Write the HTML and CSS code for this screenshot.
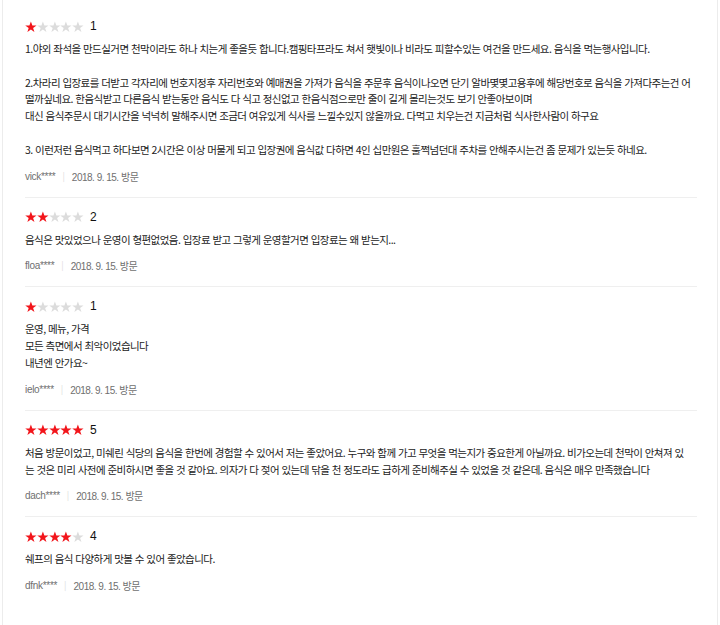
FILE: index.html
```html
<!DOCTYPE html>
<html lang="ko">
<head>
<meta charset="utf-8">
<link rel="stylesheet" href="styles.css">
<title>리뷰</title>
</head>
<body>
<div class="page">
  <ul class="reviews">
    <li class="review">
      <div class="rating">
        <span class="stars">
          <svg class="star on" viewBox="0 0 24 24"><polygon points="12,1 15,9 23.5,9 16.5,14.2 19.2,22.5 12,17.3 4.8,22.5 7.5,14.2 0.5,9 9,9"/></svg>
          <svg class="star" viewBox="0 0 24 24"><polygon points="12,1 15,9 23.5,9 16.5,14.2 19.2,22.5 12,17.3 4.8,22.5 7.5,14.2 0.5,9 9,9"/></svg>
          <svg class="star" viewBox="0 0 24 24"><polygon points="12,1 15,9 23.5,9 16.5,14.2 19.2,22.5 12,17.3 4.8,22.5 7.5,14.2 0.5,9 9,9"/></svg>
          <svg class="star" viewBox="0 0 24 24"><polygon points="12,1 15,9 23.5,9 16.5,14.2 19.2,22.5 12,17.3 4.8,22.5 7.5,14.2 0.5,9 9,9"/></svg>
          <svg class="star" viewBox="0 0 24 24"><polygon points="12,1 15,9 23.5,9 16.5,14.2 19.2,22.5 12,17.3 4.8,22.5 7.5,14.2 0.5,9 9,9"/></svg>
        </span>
        <span class="score">1</span>
      </div>
      <p class="text">1.야외 좌석을 만드실거면 천막이라도 하나 치는게 좋을듯 합니다.캠핑타프라도 쳐서 햇빛이나 비라도 피할수있는 여건을 만드세요. 음식을 먹는행사입니다.<br><br>2.차라리 입장료를 더받고 각자리에 번호지정후 자리번호와 예매권을 가져가 음식을 주문후 음식이나오면 단기 알바몇몇고용후에 해당번호로 음식을 가져다주는건 어<br>떨까싶네요. 한음식받고 다른음식 받는동안 음식도 다 식고 정신없고 한음식점으로만 줄이 길게 몰리는것도 보기 안좋아보이며<br>대신 음식주문시 대기시간을 넉넉히 말해주시면 조금더 여유있게 식사를 느낄수있지 않을까요. 다먹고 치우는건 지금처럼 식사한사람이 하구요<br><br>3. 이런저런 음식먹고 하다보면 2시간은 이상 머물게 되고 입장권에 음식값 다하면 4인 십만원은 훌쩍넘던대 주차를 안해주시는건 좀 문제가 있는듯 하네요.</p>
      <div class="meta"><span class="user">vick****</span><span class="sep">|</span><span class="date">2018. 9. 15. 방문</span></div>
    </li>
    <li class="review">
      <div class="rating">
        <span class="stars">
          <svg class="star on" viewBox="0 0 24 24"><polygon points="12,1 15,9 23.5,9 16.5,14.2 19.2,22.5 12,17.3 4.8,22.5 7.5,14.2 0.5,9 9,9"/></svg>
          <svg class="star on" viewBox="0 0 24 24"><polygon points="12,1 15,9 23.5,9 16.5,14.2 19.2,22.5 12,17.3 4.8,22.5 7.5,14.2 0.5,9 9,9"/></svg>
          <svg class="star" viewBox="0 0 24 24"><polygon points="12,1 15,9 23.5,9 16.5,14.2 19.2,22.5 12,17.3 4.8,22.5 7.5,14.2 0.5,9 9,9"/></svg>
          <svg class="star" viewBox="0 0 24 24"><polygon points="12,1 15,9 23.5,9 16.5,14.2 19.2,22.5 12,17.3 4.8,22.5 7.5,14.2 0.5,9 9,9"/></svg>
          <svg class="star" viewBox="0 0 24 24"><polygon points="12,1 15,9 23.5,9 16.5,14.2 19.2,22.5 12,17.3 4.8,22.5 7.5,14.2 0.5,9 9,9"/></svg>
        </span>
        <span class="score">2</span>
      </div>
      <p class="text">음식은 맛있었으나 운영이 형편없었음. 입장료 받고 그렇게 운영할거면 입장료는 왜 받는지...</p>
      <div class="meta"><span class="user">floa****</span><span class="sep">|</span><span class="date">2018. 9. 15. 방문</span></div>
    </li>
    <li class="review">
      <div class="rating">
        <span class="stars">
          <svg class="star on" viewBox="0 0 24 24"><polygon points="12,1 15,9 23.5,9 16.5,14.2 19.2,22.5 12,17.3 4.8,22.5 7.5,14.2 0.5,9 9,9"/></svg>
          <svg class="star" viewBox="0 0 24 24"><polygon points="12,1 15,9 23.5,9 16.5,14.2 19.2,22.5 12,17.3 4.8,22.5 7.5,14.2 0.5,9 9,9"/></svg>
          <svg class="star" viewBox="0 0 24 24"><polygon points="12,1 15,9 23.5,9 16.5,14.2 19.2,22.5 12,17.3 4.8,22.5 7.5,14.2 0.5,9 9,9"/></svg>
          <svg class="star" viewBox="0 0 24 24"><polygon points="12,1 15,9 23.5,9 16.5,14.2 19.2,22.5 12,17.3 4.8,22.5 7.5,14.2 0.5,9 9,9"/></svg>
          <svg class="star" viewBox="0 0 24 24"><polygon points="12,1 15,9 23.5,9 16.5,14.2 19.2,22.5 12,17.3 4.8,22.5 7.5,14.2 0.5,9 9,9"/></svg>
        </span>
        <span class="score">1</span>
      </div>
      <p class="text">운영, 메뉴, 가격<br>모든 측면에서 최악이었습니다<br>내년엔 안가요~</p>
      <div class="meta"><span class="user">ielo****</span><span class="sep">|</span><span class="date">2018. 9. 15. 방문</span></div>
    </li>
    <li class="review">
      <div class="rating">
        <span class="stars">
          <svg class="star on" viewBox="0 0 24 24"><polygon points="12,1 15,9 23.5,9 16.5,14.2 19.2,22.5 12,17.3 4.8,22.5 7.5,14.2 0.5,9 9,9"/></svg>
          <svg class="star on" viewBox="0 0 24 24"><polygon points="12,1 15,9 23.5,9 16.5,14.2 19.2,22.5 12,17.3 4.8,22.5 7.5,14.2 0.5,9 9,9"/></svg>
          <svg class="star on" viewBox="0 0 24 24"><polygon points="12,1 15,9 23.5,9 16.5,14.2 19.2,22.5 12,17.3 4.8,22.5 7.5,14.2 0.5,9 9,9"/></svg>
          <svg class="star on" viewBox="0 0 24 24"><polygon points="12,1 15,9 23.5,9 16.5,14.2 19.2,22.5 12,17.3 4.8,22.5 7.5,14.2 0.5,9 9,9"/></svg>
          <svg class="star on" viewBox="0 0 24 24"><polygon points="12,1 15,9 23.5,9 16.5,14.2 19.2,22.5 12,17.3 4.8,22.5 7.5,14.2 0.5,9 9,9"/></svg>
        </span>
        <span class="score">5</span>
      </div>
      <p class="text">처음 방문이었고, 미쉐린 식당의 음식을 한번에 경험할 수 있어서 저는 좋았어요. 누구와 함께 가고 무엇을 먹는지가 중요한게 아닐까요. 비가오는데 천막이 안쳐져 있<br>는 것은 미리 사전에 준비하시면 좋을 것 같아요. 의자가 다 젖어 있는데 닦을 천 정도라도 급하게 준비해주실 수 있었을 것 같은데. 음식은 매우 만족했습니다</p>
      <div class="meta"><span class="user">dach****</span><span class="sep">|</span><span class="date">2018. 9. 15. 방문</span></div>
    </li>
    <li class="review">
      <div class="rating">
        <span class="stars">
          <svg class="star on" viewBox="0 0 24 24"><polygon points="12,1 15,9 23.5,9 16.5,14.2 19.2,22.5 12,17.3 4.8,22.5 7.5,14.2 0.5,9 9,9"/></svg>
          <svg class="star on" viewBox="0 0 24 24"><polygon points="12,1 15,9 23.5,9 16.5,14.2 19.2,22.5 12,17.3 4.8,22.5 7.5,14.2 0.5,9 9,9"/></svg>
          <svg class="star on" viewBox="0 0 24 24"><polygon points="12,1 15,9 23.5,9 16.5,14.2 19.2,22.5 12,17.3 4.8,22.5 7.5,14.2 0.5,9 9,9"/></svg>
          <svg class="star on" viewBox="0 0 24 24"><polygon points="12,1 15,9 23.5,9 16.5,14.2 19.2,22.5 12,17.3 4.8,22.5 7.5,14.2 0.5,9 9,9"/></svg>
          <svg class="star" viewBox="0 0 24 24"><polygon points="12,1 15,9 23.5,9 16.5,14.2 19.2,22.5 12,17.3 4.8,22.5 7.5,14.2 0.5,9 9,9"/></svg>
        </span>
        <span class="score">4</span>
      </div>
      <p class="text">쉐프의 음식 다양하게 맛볼 수 있어 좋았습니다.</p>
      <div class="meta"><span class="user">dfnk****</span><span class="sep">|</span><span class="date">2018. 9. 15. 방문</span></div>
    </li>
  </ul>
</div>
</body>
</html>
```

FILE: styles.css
```css
html, body {
  margin: 0;
  padding: 0;
  background: #fff;
}
body {
  font-family: "Noto Sans CJK KR", "Noto Sans", sans-serif;
  color: #333;
}
.page {
  margin: 0 2px;
  min-height: 625px;
  border-left: 1px solid #ececec;
  border-right: 1px solid #ececec;
  padding: 7px 20px 0 22px;
  box-sizing: border-box;
}
.reviews {
  list-style: none;
  margin: 0;
  padding: 0;
}
.review {
  padding: 11px 0 12px;
  border-bottom: 1px solid #efefef;
}
.review:last-child {
  border-bottom: none;
}
.rating {
  display: flex;
  align-items: center;
  height: 17px;
}
.stars {
  display: flex;
}
.star {
  width: 11.8px;
  height: 11.8px;
  fill: #dcdcdc;
}
.star.on {
  fill: #f2151b;
}
.score {
  margin-left: 6px;
  font-family: "Liberation Sans", sans-serif;
  font-size: 12px;
  color: #111;
  line-height: 17px;
}
.text {
  margin: 6px 0 0;
  font-size: 10.5px;
  line-height: 16.8px;
  letter-spacing: -0.55px;
  color: #222;
}
.meta {
  margin-top: 9px;
  display: flex;
  align-items: center;
  height: 17px;
  font-size: 10px;
  color: #6f6f6f;
}
.user {
  font-family: "Liberation Sans", "Noto Sans CJK KR", sans-serif;
  letter-spacing: -0.3px;
}
.sep {
  margin: 0 7px;
  color: #ddd;
  font-size: 9px;
}
.date {
  font-family: "Liberation Sans", "Noto Sans CJK KR", sans-serif;
  letter-spacing: -0.5px;
}
```
